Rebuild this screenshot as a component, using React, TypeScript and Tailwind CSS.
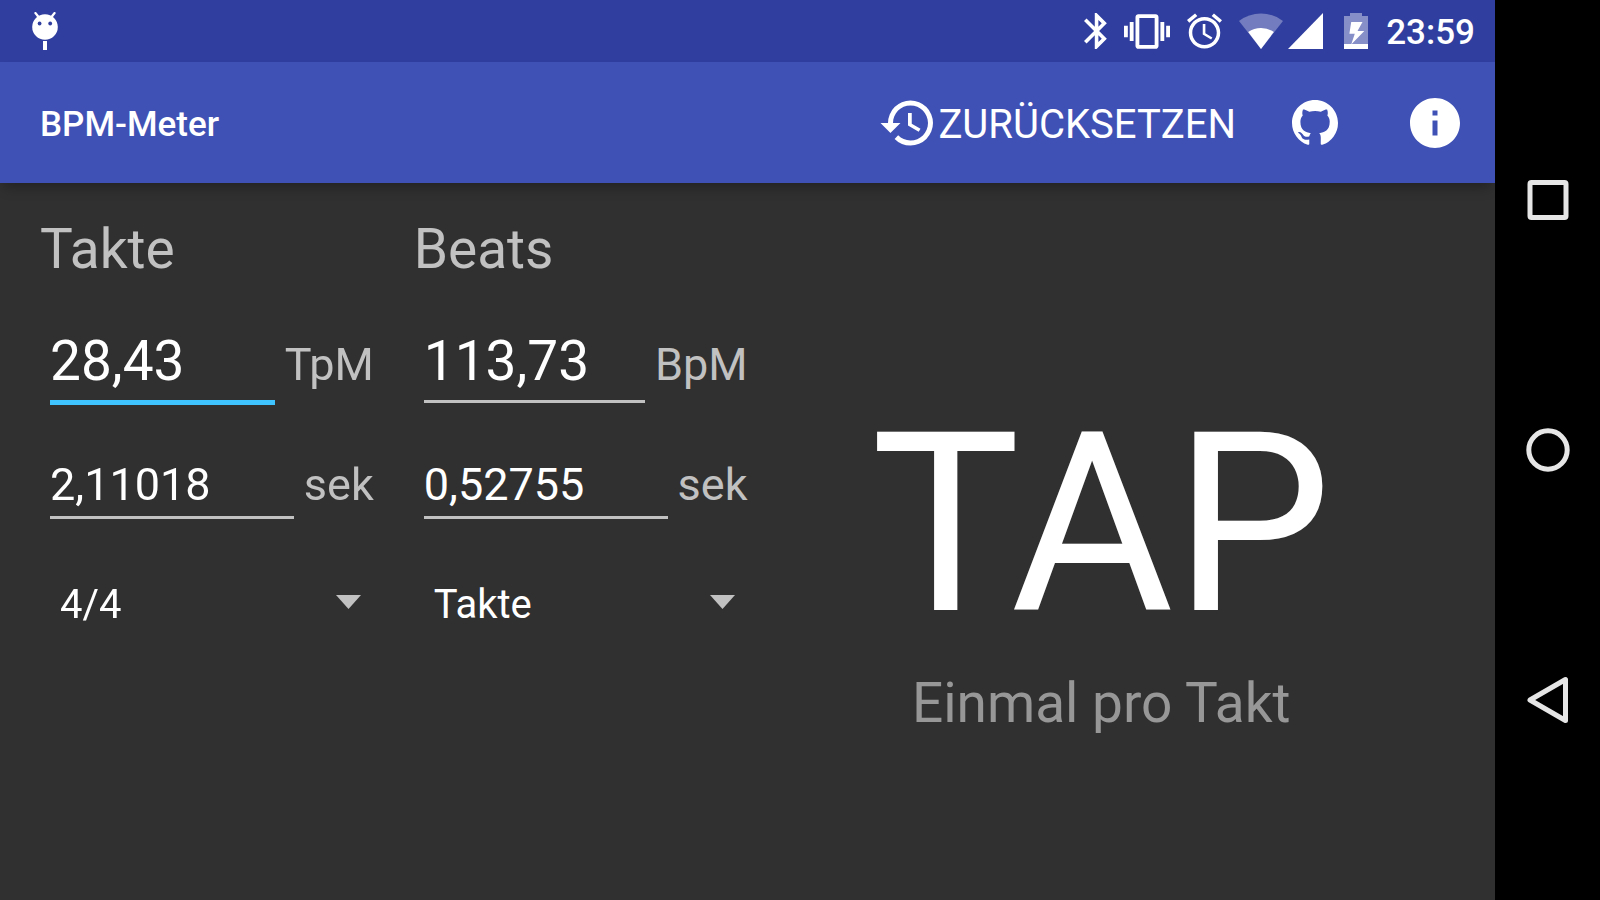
import { useState } from "react";
import type { ReactNode } from "react";

function StatusBar() {
  return (
    <div className="flex h-[62px] items-center justify-between bg-[#303f9f] pl-8 pr-5 text-white">
      <svg className="h-[38px] w-[26px]" viewBox="0 0 26 38" aria-hidden="true">
        <path d="M3.4 1l4 5M22.6 1l-4 5" stroke="#fff" strokeWidth="2.2" strokeLinecap="round" />
        <circle cx="13" cy="15" r="12.8" fill="#fff" />
        <circle cx="7.6" cy="11.5" r="1.9" fill="#303f9f" />
        <circle cx="18.2" cy="11.5" r="1.9" fill="#303f9f" />
        <path d="M11 29h4v9h-4z" fill="#fff" />
      </svg>
      <div className="flex items-center gap-[17px]">
        <svg className="h-9 w-[23px]" viewBox="5 2 12.8 20" fill="currentColor" aria-hidden="true">
          <path d="M17.71 7.71 12 2h-1v7.59L6.41 5 5 6.41 10.59 12 5 17.59 6.41 19 11 14.41V22h1l5.71-5.71-4.3-4.29 4.3-4.29zM13 5.83l1.88 1.88L13 9.59V5.83zm1.88 10.46L13 18.17v-3.76l1.88 1.88z" />
        </svg>
        <svg className="h-[35px] w-[46px]" viewBox="0 3 24 18" fill="currentColor" aria-hidden="true">
          <path d="M0 15h2V9H0v6zm3 2h2V7H3v10zm19-8v6h2V9h-2zm-3 8h2V7h-2v10zM16.5 3h-9C6.67 3 6 3.67 6 4.5v15c0 .83.67 1.5 1.5 1.5h9c.83 0 1.5-.67 1.5-1.5v-15c0-.83-.67-1.5-1.5-1.5zM16 19H8V5h8v14z" />
        </svg>
        <svg className="h-9 w-[35px]" viewBox="2 1.86 20 20.14" fill="currentColor" aria-hidden="true">
          <path d="M22 5.72l-4.6-3.86-1.29 1.53 4.6 3.86L22 5.72zM7.88 3.39L6.6 1.86 2 5.71l1.29 1.53 4.59-3.85zM12.5 8H11v6l4.75 2.85.75-1.23-4-2.37V8zM12 4c-4.97 0-9 4.03-9 9s4.02 9 9 9c4.97 0 9-4.03 9-9s-4.03-9-9-9zm0 16c-3.87 0-7-3.13-7-7s3.13-7 7-7 7 3.13 7 7-3.13 7-7 7z" />
        </svg>
        <div className="flex items-center gap-[5px]">
          <svg className="h-9 w-11" viewBox="0 0 44 36" fill="currentColor" aria-hidden="true">
            <path d="M22 36 0 8a36 36 0 0 1 44 0z" opacity=".32" />
            <path d="M22 36 9.2 19a22 22 0 0 1 25.6 0z" />
          </svg>
          <svg className="h-9 w-[35px]" viewBox="0 0 35 36" fill="currentColor" aria-hidden="true">
            <path d="M35 0v36H0z" />
          </svg>
        </div>
        <div className="flex items-center gap-[18px] pl-1">
          <svg className="h-9 w-6" viewBox="0 0 24 36" fill="currentColor" aria-hidden="true">
            <path d="M6 0h12v3h6v28H0V3h6z" opacity=".42" />
            <path d="M0 31h24v5H0z" />
            <path d="M7.2 9h11.3l-5 9h6.8L7.2 31.4l3.6-10.6H5.4z" />
          </svg>
          <time className="pt-1 text-[35px] leading-[40px] font-medium">23:59</time>
        </div>
      </div>
    </div>
  );
}

function Toolbar({ onReset }: { onReset: () => void }) {
  return (
    <header className="flex h-[121px] items-center justify-between bg-[#3f51b5] pr-[30px] pl-10 text-white shadow-[0_8px_12px_-4px_rgba(0,0,0,0.3)]">
      <h1 className="pt-1 text-[35px] leading-[40px] font-medium">BPM-Meter</h1>
      <div className="flex items-center gap-[49px]">
        <button type="button" onClick={onReset} className="flex items-center text-[40px] leading-[48px]">
          <svg className="size-[60px]" viewBox="0 0 24 24" fill="currentColor" aria-hidden="true">
            <path d="M13 3a9 9 0 0 0-9 9H1l3.89 3.89.07.14L9 12H6c0-3.87 3.13-7 7-7s7 3.13 7 7-3.13 7-7 7c-1.93 0-3.68-.79-4.94-2.06l-1.42 1.42A8.954 8.954 0 0 0 13 21a9 9 0 0 0 0-18zm-1 5v5l4.28 2.54.72-1.21-3.5-2.08V8H12z" />
          </svg>
          <span className="pt-1">ZURÜCKSETZEN</span>
        </button>
        <div className="flex items-center gap-[60px]">
          <a href="#github" aria-label="GitHub" className="flex size-[60px] items-center justify-center">
            <svg className="size-[46px]" viewBox="0 0 16 16" fill="currentColor" aria-hidden="true">
              <path d="M8 0C3.58 0 0 3.58 0 8c0 3.54 2.29 6.53 5.47 7.59.4.07.55-.17.55-.38 0-.19-.01-.82-.01-1.49-2.01.37-2.53-.49-2.69-.94-.09-.23-.48-.94-.82-1.13-.28-.15-.68-.52-.01-.53.63-.01 1.08.58 1.23.82.72 1.21 1.87.87 2.33.66.07-.52.28-.87.51-1.07-1.78-.2-3.64-.89-3.64-3.95 0-.87.31-1.59.82-2.15-.08-.2-.36-1.02.08-2.12 0 0 .67-.21 2.2.82.64-.18 1.32-.27 2-.27s1.36.09 2 .27c1.53-1.04 2.2-.82 2.2-.82.44 1.1.16 1.92.08 2.12.51.56.82 1.27.82 2.15 0 3.07-1.87 3.75-3.65 3.95.29.25.54.73.54 1.48 0 1.07-.01 1.93-.01 2.2 0 .21.15.46.55.38A8.01 8.01 0 0 0 16 8c0-4.42-3.58-8-8-8z" />
            </svg>
          </a>
          <button type="button" aria-label="Info" className="size-[60px]">
            <svg className="size-[60px]" viewBox="0 0 24 24" fill="currentColor" aria-hidden="true">
              <path d="M12 2C6.48 2 2 6.48 2 12s4.48 10 10 10 10-4.48 10-10S17.52 2 12 2zm1 15h-2v-6h2v6zm0-8h-2V7h2v2z" />
            </svg>
          </button>
        </div>
      </div>
    </header>
  );
}

type FieldProps = {
  id: string;
  unit: string;
  value: string;
  onChange: (value: string) => void;
  autoFocus?: boolean;
};

function LargeField({ id, unit, value, onChange, autoFocus }: FieldProps) {
  return (
    <div className="mt-12 flex h-[76px] items-baseline">
      <input
        id={id}
        type="text"
        inputMode="decimal"
        autoFocus={autoFocus}
        value={value}
        onChange={(e) => onChange(e.target.value)}
        className="mx-[10px] box-content h-16 min-w-0 flex-1 border-b-3 border-[#c1c1c1] bg-transparent pb-[7px] text-[55px] leading-[64px] text-white caret-transparent outline-none focus:border-b-5 focus:border-[#40c4ff]"
      />
      <label htmlFor={id} className="text-[45px] leading-[52px]">
        {unit}
      </label>
    </div>
  );
}

function SmallField({ id, unit, value, onChange }: FieldProps) {
  return (
    <div className="mt-[54px] flex h-[60px] items-baseline">
      <input
        id={id}
        type="text"
        inputMode="decimal"
        value={value}
        onChange={(e) => onChange(e.target.value)}
        className="mx-[10px] box-content h-[52px] min-w-0 flex-1 border-b-3 border-[#c1c1c1] bg-transparent pb-[5px] text-[45px] leading-[52px] text-white outline-none"
      />
      <label htmlFor={id} className="text-[45px] leading-[52px]">
        {unit}
      </label>
    </div>
  );
}

type SpinnerProps = {
  labelledBy: string;
  options: string[];
  value: string;
  onChange: (value: string) => void;
};

function Spinner({ labelledBy, options, value, onChange }: SpinnerProps) {
  return (
    <div className="mt-[62px] grid">
      <select
        aria-labelledby={labelledBy}
        value={value}
        onChange={(e) => onChange(e.target.value)}
        className="col-start-1 row-start-1 h-12 w-full appearance-none bg-transparent pr-12 pl-5 text-[40px] leading-[48px] text-white outline-none"
      >
        {options.map((option) => (
          <option key={option} className="bg-[#424242]">
            {option}
          </option>
        ))}
      </select>
      <svg
        className="pointer-events-none col-start-1 row-start-1 mt-[14px] mr-[13px] h-[14px] w-[25px] justify-self-end"
        viewBox="0 0 25 14"
        fill="currentColor"
        aria-hidden="true"
      >
        <path d="M0 0h25L12.5 14z" />
      </svg>
    </div>
  );
}

function Column({ id, title, children }: { id: string; title: string; children: ReactNode }) {
  return (
    <section className="min-w-0 text-[#c1c1c1]">
      <h2 id={id} className="text-[55px] leading-[64px]">
        {title}
      </h2>
      {children}
    </section>
  );
}

function NavigationBar() {
  return (
    <nav className="flex w-[105px] shrink-0 flex-col items-center justify-around bg-black py-[75px]">
      <button type="button" aria-label="Übersicht">
        <svg className="size-12" viewBox="0 0 48 48" fill="none" stroke="#e6e6e6" strokeWidth="5" aria-hidden="true">
          <rect x="6" y="6.5" width="36" height="35" rx="1.5" />
        </svg>
      </button>
      <button type="button" aria-label="Startseite">
        <svg className="size-12" viewBox="0 0 48 48" fill="none" stroke="#e6e6e6" strokeWidth="5" aria-hidden="true">
          <circle cx="24" cy="24" r="19.2" />
        </svg>
      </button>
      <button type="button" aria-label="Zurück">
        <svg
          className="size-12"
          viewBox="0 0 48 48"
          fill="none"
          stroke="#e6e6e6"
          strokeWidth="5"
          strokeLinejoin="round"
          aria-hidden="true"
        >
          <path d="M6 24 41.5 3.5v41z" />
        </svg>
      </button>
    </nav>
  );
}

const initialValues = { tpm: "28,43", barSeconds: "2,11018", bpm: "113,73", beatSeconds: "0,52755" };

export default function App() {
  const [values, setValues] = useState(initialValues);
  const [meter, setMeter] = useState("4/4");
  const [mode, setMode] = useState("Takte");

  const update = (key: keyof typeof initialValues) => (value: string) =>
    setValues((current) => ({ ...current, [key]: value }));

  return (
    <div className="flex min-h-screen bg-[#303030] font-[Roboto,sans-serif]">
      <div className="flex min-w-0 flex-1 flex-col">
        <StatusBar />
        <Toolbar onReset={() => setValues({ tpm: "", barSeconds: "", bpm: "", beatSeconds: "" })} />
        <main className="flex flex-1 px-10 pt-[34px]">
          <div className="grid min-w-0 flex-1 grid-cols-2 content-start gap-10">
            <Column id="bars" title="Takte">
              <LargeField id="tpm" unit="TpM" value={values.tpm} onChange={update("tpm")} autoFocus />
              <SmallField id="bar-seconds" unit="sek" value={values.barSeconds} onChange={update("barSeconds")} />
              <Spinner labelledBy="bars" options={["2/4", "3/4", "4/4"]} value={meter} onChange={setMeter} />
            </Column>
            <Column id="beats" title="Beats">
              <LargeField id="bpm" unit="BpM" value={values.bpm} onChange={update("bpm")} />
              <SmallField id="beat-seconds" unit="sek" value={values.beatSeconds} onChange={update("beatSeconds")} />
              <Spinner labelledBy="beats" options={["Takte", "Beats"]} value={mode} onChange={setMode} />
            </Column>
          </div>
          <button type="button" className="flex min-w-0 flex-1 flex-col items-center justify-center pb-0.5">
            <span className="text-[250px] leading-[290px] text-white">TAP</span>
            <span className="text-[55px] leading-[66px] text-[#979797]">
              Einmal pro {mode === "Takte" ? "Takt" : "Beat"}
            </span>
          </button>
        </main>
      </div>
      <NavigationBar />
    </div>
  );
}
